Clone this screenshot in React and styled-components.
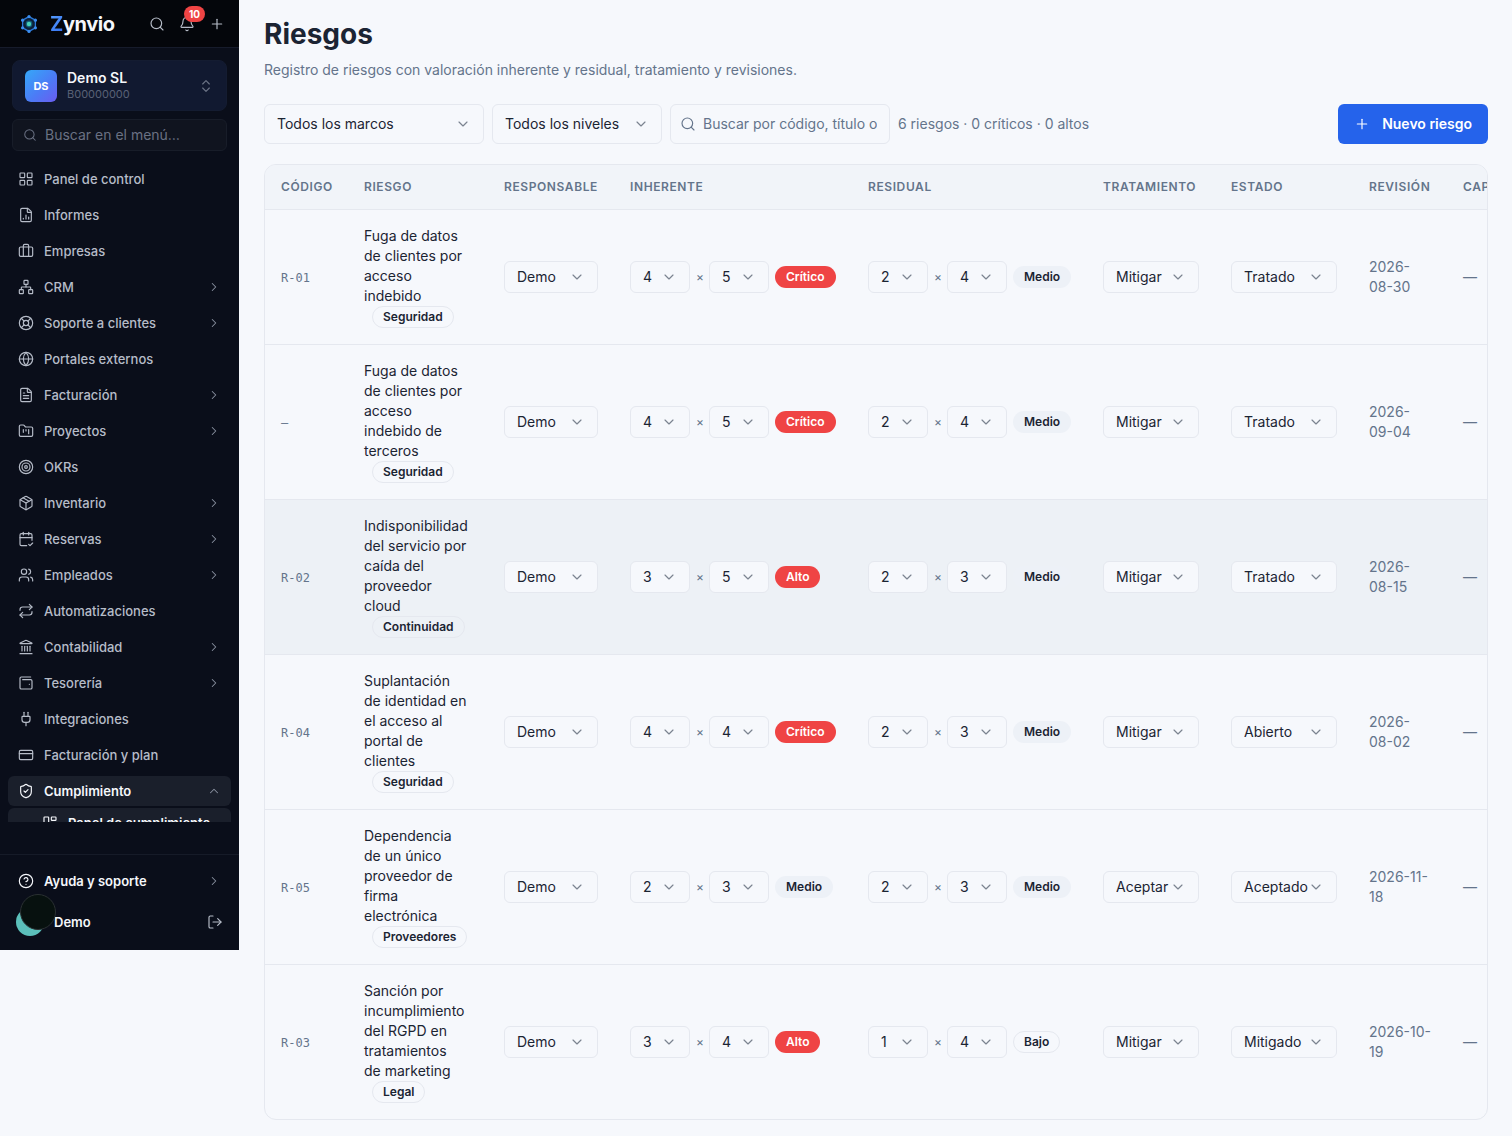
import React from 'react';
import styled, { createGlobalStyle, css } from 'styled-components';
import {
  Bell,
  Briefcase,
  CalendarCheck2,
  ChevronDown,
  ChevronRight,
  ChevronUp,
  ChevronsUpDown,
  CircleHelp,
  CreditCard,
  FileChartColumn,
  FileText,
  FolderKanban,
  Globe,
  Landmark,
  LayoutDashboard,
  LayoutGrid,
  LifeBuoy,
  LogOut,
  Network,
  Package,
  Plug,
  Plus,
  Repeat,
  Search,
  ShieldCheck,
  Target,
  Users,
  WalletMinimal,
} from 'lucide-react';

const color = {
  page: '#f6f8fc',
  head: '#f1f4f9',
  rowActive: '#edf1f6',
  line: '#e5e8ef',
  ink: '#1b2433',
  muted: '#64748b',
  primary: '#2563eb',
  danger: '#ef4444',
};

const GlobalStyle = createGlobalStyle`
  *, *::before, *::after { box-sizing: border-box; }
  body {
    margin: 0;
    background: ${color.page};
    color: ${color.ink};
    font: 400 14px/20px Inter, 'Noto Sans', sans-serif;
  }
  button, input, select { font: inherit; color: inherit; margin: 0; }
  button { cursor: pointer; }
  svg { flex: none; }
`;

/* ---------- Shell ---------- */

const Shell = styled.div`
  display: grid;
  grid-template-columns: 240px minmax(0, 1fr);
  align-items: start;
`;

const Sidebar = styled.aside`
  position: sticky;
  top: 0;
  display: flex;
  flex-direction: column;
  margin-right: 1px;
  background: #0a0e1a;
  color: #b6bcc8;
`;

const Brand = styled.header`
  display: flex;
  align-items: center;
  height: 48px;
  padding: 0 7px 0 20px;
  background: #04060b;
  border-bottom: 1px solid #161b2b;
`;

const BrandName = styled.a`
  display: flex;
  flex: 1;
  align-items: center;
  gap: 12px;
  color: #f5f7fb;
  font-size: 20px;
  font-weight: 700;
  line-height: 24px;
  letter-spacing: -0.02em;
  text-decoration: none;
`;

const BrandInitial = styled.span`
  background: linear-gradient(135deg, #5aa2ff, #2f6bf0);
  background-clip: text;
  color: transparent;
`;

const IconButton = styled.button`
  position: relative;
  display: grid;
  place-items: center;
  width: 30px;
  height: 30px;
  padding: 0;
  border: 0;
  background: none;
  color: #b6bcc8;
`;

const Counter = styled.span`
  position: absolute;
  top: -3px;
  right: -3px;
  padding: 0 5px;
  border-radius: 8px;
  background: ${color.danger};
  color: #fff;
  font-size: 10px;
  font-weight: 700;
  line-height: 16px;
`;

const CompanyButton = styled.button`
  display: flex;
  align-items: center;
  gap: 10px;
  margin: 12px 12px 8px;
  padding: 8px 12px;
  border: 1px solid #141c31;
  border-radius: 8px;
  background: #111930;
  color: #6b7385;
  text-align: left;
`;

const CompanyLogo = styled.span`
  display: grid;
  place-items: center;
  width: 32px;
  height: 32px;
  border-radius: 6px;
  background: linear-gradient(135deg, #35a8f8, #4b7cf6 55%, #6a5cf0);
  color: #fff;
  font-size: 11px;
  font-weight: 700;
  line-height: 16px;
`;

const CompanyText = styled.span`
  display: flex;
  flex: 1;
  flex-direction: column;
`;

const CompanyName = styled.span`
  color: #f5f7fb;
  font-weight: 600;
  line-height: 17px;
`;

const CompanyId = styled.span`
  color: #596176;
  font-size: 11px;
  line-height: 16px;
`;

const MenuSearch = styled.label`
  display: flex;
  align-items: center;
  gap: 8px;
  height: 32px;
  margin: 0 12px;
  padding: 0 10px;
  border: 1px solid #181d29;
  border-radius: 6px;
  background: #10141f;
  color: #6a7183;
`;

const BareInput = styled.input`
  flex: 1;
  width: 0;
  min-width: 0;
  padding: 0;
  border: 0;
  outline: 0;
  background: none;
  &::placeholder { color: currentColor; opacity: 1; }
`;

const Nav = styled.nav`
  display: flex;
  flex-direction: column;
  gap: 6px;
  height: 671px;
  padding: 13px 8px 0;
  overflow-y: auto;
  scrollbar-width: none;
`;

const NavGroup = styled.div`
  display: flex;
  flex-direction: column;
  gap: 2px;
`;

const NavItem = styled.a`
  display: flex;
  flex: none;
  align-items: center;
  gap: 10px;
  width: 100%;
  height: 30px;
  padding: 0 10px;
  padding-left: ${(p) => (p.$nested ? '34px' : '10px')};
  border: 0;
  border-radius: 6px;
  background: ${(p) => (p.$active ? '#1a1f2b' : 'none')};
  color: ${(p) => (p.$bright || p.$active ? '#f5f7fb' : '#b6bcc8')};
  font-size: 13px;
  font-weight: ${(p) => (p.$bright || p.$active ? 600 : 500)};
  text-align: left;
  text-decoration: none;
  white-space: nowrap;
`;

const NavLabel = styled.span`
  flex: 1;
`;

const NavArrow = styled.span`
  display: flex;
  color: #8a91a0;
`;

const SidebarFooter = styled.footer`
  display: flex;
  flex-direction: column;
  gap: 12px;
  margin-top: 32px;
  padding: 11px 8px 14px;
  border-top: 1px solid #161b28;
`;

const UserRow = styled.div`
  position: relative;
  display: flex;
  align-items: center;
  gap: 10px;
  height: 28px;
  padding: 0 1px 0 8px;
  color: #f5f7fb;
  font-size: 13px;
  font-weight: 600;
`;

const Avatar = styled.span`
  width: 28px;
  height: 28px;
  border-radius: 50%;
  background: #5bbfba;
`;

const FloatingButton = styled.button`
  position: absolute;
  top: -14px;
  left: 12px;
  width: 36px;
  height: 36px;
  padding: 0;
  border: 1px solid #2a3032;
  border-radius: 50%;
  background: #07110f;
`;

/* ---------- Page ---------- */

const Main = styled.main`
  padding: 16px 24px;
`;

const Title = styled.h1`
  margin: 0 0 8px;
  font-size: 28px;
  font-weight: 700;
  line-height: 36px;
`;

const Subtitle = styled.p`
  margin: 0 0 24px;
  color: ${color.muted};
`;

const Toolbar = styled.div`
  display: flex;
  align-items: center;
  gap: 8px;
  margin-bottom: 20px;
`;

const Summary = styled.span`
  flex: 1;
  color: ${color.muted};
`;

const field = css`
  border: 1px solid ${color.line};
  border-radius: 6px;
  background: ${color.page};
`;

const SearchField = styled.label`
  ${field}
  display: flex;
  align-items: center;
  gap: 7px;
  width: 220px;
  height: 40px;
  padding: 0 12px 0 9px;
  color: ${color.muted};
`;

const PrimaryButton = styled.button`
  display: flex;
  align-items: center;
  gap: 12px;
  height: 40px;
  padding: 0 16px;
  border: 0;
  border-radius: 6px;
  background: ${color.primary};
  color: #fff;
  font-weight: 600;
`;

const SelectBox = styled.span`
  position: relative;
  display: block;
  flex: none;
  width: ${(p) => p.$width || '100%'};
  color: ${color.ink};
`;

const NativeSelect = styled.select`
  ${field}
  display: block;
  width: 100%;
  height: ${(p) => (p.$large ? '40px' : '32px')};
  padding: 0 20px 0 12px;
  appearance: none;
`;

const SelectArrow = styled(ChevronDown)`
  position: absolute;
  top: calc(50% - 8px);
  right: 13px;
  color: #7b8390;
  pointer-events: none;
`;

/* ---------- Table ---------- */

const TableCard = styled.section`
  border: 1px solid ${color.line};
  border-radius: 12px;
  overflow-x: auto;
  scrollbar-width: none;
`;

const Table = styled.table`
  width: 100%;
  min-width: 1322px;
  table-layout: fixed;
  border-collapse: separate;
  border-spacing: 0;
`;

const Column = styled.col`
  width: ${(p) => p.$width}px;
`;

const HeadCell = styled.th`
  height: 45px;
  padding: 0 16px;
  border-bottom: 1px solid ${color.line};
  background: ${color.head};
  color: ${color.muted};
  font-size: 12px;
  font-weight: 600;
  letter-spacing: 0.05em;
  line-height: 16px;
  text-align: left;
  text-transform: uppercase;
`;

const Cell = styled.td`
  padding: 16px;
  border-bottom: 1px solid ${color.line};
  color: ${(p) => (p.$muted ? color.muted : color.ink)};
  vertical-align: middle;
`;

const Row = styled.tr`
  background: ${(p) => (p.$active ? color.rowActive : 'transparent')};
  &:last-child > td { border-bottom: 0; }
`;

const Code = styled.span`
  color: ${color.muted};
  font-family: 'DejaVu Sans Mono', 'Liberation Mono', monospace;
  font-size: 12px;
`;

const RiskName = styled.div`
  max-width: 104px;
`;

const Score = styled.div`
  display: flex;
  align-items: center;
  gap: 6px;
`;

const Times = styled.span`
  width: 7px;
  color: ${color.muted};
  font-size: 12px;
`;

const badgeTones = {
  danger: css`background: ${color.danger}; color: #fff;`,
  soft: css`background: #edf1f7;`,
  outline: css`border-color: ${color.line};`,
};

const Badge = styled.span`
  display: block;
  width: fit-content;
  margin-left: ${(p) => (p.$indent ? '8px' : '0')};
  padding: 2px 10px;
  border: 1px solid transparent;
  border-radius: 11px;
  font-size: 12px;
  font-weight: 600;
  line-height: 16px;
  ${(p) => badgeTones[p.$tone]}
`;

const DatePart = styled.span`
  white-space: nowrap;
`;

/* ---------- Data ---------- */

const menu = [
  { label: 'Panel de control', icon: LayoutGrid },
  { label: 'Informes', icon: FileChartColumn },
  { label: 'Empresas', icon: Briefcase },
  { label: 'CRM', icon: Network, more: true },
  { label: 'Soporte a clientes', icon: LifeBuoy, more: true },
  { label: 'Portales externos', icon: Globe },
  { label: 'Facturación', icon: FileText, more: true },
  { label: 'Proyectos', icon: FolderKanban, more: true },
  { label: 'OKRs', icon: Target },
  { label: 'Inventario', icon: Package, more: true },
  { label: 'Reservas', icon: CalendarCheck2, more: true },
  { label: 'Empleados', icon: Users, more: true },
  { label: 'Automatizaciones', icon: Repeat },
  { label: 'Contabilidad', icon: Landmark, more: true },
  { label: 'Tesorería', icon: WalletMinimal, more: true },
  { label: 'Integraciones', icon: Plug },
  { label: 'Facturación y plan', icon: CreditCard },
];

const columns = [
  ['Código', 83],
  ['Riesgo', 140],
  ['Responsable', 126],
  ['Inherente', 238],
  ['Residual', 235],
  ['Tratamiento', 128],
  ['Estado', 138],
  ['Revisión', 94],
  ['CAPA', 140],
];

const tones = { Crítico: 'danger', Alto: 'danger', Medio: 'soft', Bajo: 'outline' };

const risks = [
  { code: 'R-01', name: 'Fuga de datos de clientes por acceso indebido', tag: 'Seguridad', inherent: [4, 5, 'Crítico'], residual: [2, 4, 'Medio'], treatment: 'Mitigar', status: 'Tratado', review: ['2026-', '08-30'] },
  { code: '—', name: 'Fuga de datos de clientes por acceso indebido de terceros', tag: 'Seguridad', inherent: [4, 5, 'Crítico'], residual: [2, 4, 'Medio'], treatment: 'Mitigar', status: 'Tratado', review: ['2026-', '09-04'] },
  { code: 'R-02', name: 'Indisponibilidad del servicio por caída del proveedor cloud', tag: 'Continuidad', inherent: [3, 5, 'Alto'], residual: [2, 3, 'Medio'], treatment: 'Mitigar', status: 'Tratado', review: ['2026-', '08-15'], active: true },
  { code: 'R-04', name: 'Suplantación de identidad en el acceso al portal de clientes', tag: 'Seguridad', inherent: [4, 4, 'Crítico'], residual: [2, 3, 'Medio'], treatment: 'Mitigar', status: 'Abierto', review: ['2026-', '08-02'] },
  { code: 'R-05', name: 'Dependencia de un único proveedor de firma electrónica', tag: 'Proveedores', inherent: [2, 3, 'Medio'], residual: [2, 3, 'Medio'], treatment: 'Aceptar', status: 'Aceptado', review: ['2026-11-', '18'] },
  { code: 'R-03', name: 'Sanción por incumplimiento del RGPD en tratamientos de\u00a0marketing', tag: 'Legal', inherent: [3, 4, 'Alto'], residual: [1, 4, 'Bajo'], treatment: 'Mitigar', status: 'Mitigado', review: ['2026-10-', '19'] },
];

const levels = ['1', '2', '3', '4', '5'];
const treatments = ['Mitigar', 'Aceptar'];
const statuses = ['Abierto', 'Tratado', 'Aceptado', 'Mitigado'];

/* ---------- Components ---------- */

function BrandMark() {
  const nodes = [[9, 1.6], [15.4, 5.2], [15.4, 12.8], [9, 16.4], [2.6, 12.8], [2.6, 5.2]];
  return (
    <svg width="18" height="18" viewBox="0 0 18 18" aria-hidden="true">
      <path d="M9 1.6 15.4 5.2V12.8L9 16.4 2.6 12.8V5.2Z" fill="#0c2038" stroke="#2b78d8" strokeWidth="1.3" />
      {nodes.map(([x, y]) => (
        <circle key={`${x}-${y}`} cx={x} cy={y} r="1.6" fill="#3b8ef0" />
      ))}
      <circle cx="9" cy="9" r="3.4" fill="#145a78" />
      <circle cx="9" cy="9" r="2.2" fill="#45d0b8" />
    </svg>
  );
}

function Select({ label, value, options, width, large }) {
  return (
    <SelectBox $width={width}>
      <NativeSelect aria-label={label} defaultValue={value} $large={large}>
        {options.map((option) => (
          <option key={option} value={option}>{option}</option>
        ))}
      </NativeSelect>
      <SelectArrow size={16} strokeWidth={1.75} aria-hidden="true" />
    </SelectBox>
  );
}

function RiskScore({ kind, code, score: [probability, impact, level] }) {
  return (
    <Score>
      <Select label={`Probabilidad ${kind} ${code}`} value={String(probability)} options={levels} width="60px" />
      <Times>×</Times>
      <Select label={`Impacto ${kind} ${code}`} value={String(impact)} options={levels} width="60px" />
      <Badge $tone={tones[level]}>{level}</Badge>
    </Score>
  );
}

function MenuEntry({ icon: Icon, label, more, arrow: Arrow = ChevronRight, ...rest }) {
  const tag = more ? { as: 'button', type: 'button' } : { href: '#' };
  return (
    <NavItem {...tag} {...rest}>
      <Icon size={16} strokeWidth={1.75} aria-hidden="true" />
      <NavLabel>{label}</NavLabel>
      {more && (
        <NavArrow><Arrow size={14} strokeWidth={1.75} aria-hidden="true" /></NavArrow>
      )}
    </NavItem>
  );
}

function AppSidebar() {
  return (
    <Sidebar>
      <Brand>
        <BrandName href="#">
          <BrandMark />
          <span><BrandInitial>Z</BrandInitial>ynvio</span>
        </BrandName>
        <IconButton type="button" aria-label="Buscar"><Search size={16} strokeWidth={1.75} /></IconButton>
        <IconButton type="button" aria-label="Notificaciones">
          <Bell size={16} strokeWidth={1.75} />
          <Counter>10</Counter>
        </IconButton>
        <IconButton type="button" aria-label="Crear"><Plus size={16} strokeWidth={1.75} /></IconButton>
      </Brand>
      <CompanyButton type="button">
        <CompanyLogo>DS</CompanyLogo>
        <CompanyText>
          <CompanyName>Demo SL</CompanyName>
          <CompanyId>B00000000</CompanyId>
        </CompanyText>
        <ChevronsUpDown size={16} strokeWidth={1.75} aria-hidden="true" />
      </CompanyButton>
      <MenuSearch>
        <Search size={14} strokeWidth={1.75} aria-hidden="true" />
        <BareInput type="text" aria-label="Buscar en el menú" placeholder="Buscar en el menú…" />
      </MenuSearch>
      <Nav>
        {menu.map((item) => <MenuEntry key={item.label} {...item} />)}
        <NavGroup>
          <MenuEntry icon={ShieldCheck} label="Cumplimiento" more arrow={ChevronUp} $active />
          <MenuEntry icon={LayoutDashboard} label="Panel de cumplimiento" $active $nested />
        </NavGroup>
      </Nav>
      <SidebarFooter>
        <MenuEntry icon={CircleHelp} label="Ayuda y soporte" more $bright />
        <UserRow>
          <Avatar />
          <NavLabel>Demo</NavLabel>
          <IconButton type="button" aria-label="Cerrar sesión"><LogOut size={16} strokeWidth={1.75} /></IconButton>
          <FloatingButton type="button" aria-label="Asistente" />
        </UserRow>
      </SidebarFooter>
    </Sidebar>
  );
}

export default function App() {
  return (
    <>
      <GlobalStyle />
      <Shell>
        <AppSidebar />
        <Main>
          <Title>Riesgos</Title>
          <Subtitle>Registro de riesgos con valoración inherente y residual, tratamiento y revisiones.</Subtitle>
          <Toolbar>
            <Select label="Marco" value="Todos los marcos" options={['Todos los marcos']} width="220px" large />
            <Select label="Nivel" value="Todos los niveles" options={['Todos los niveles']} width="170px" large />
            <SearchField>
              <Search size={16} strokeWidth={1.75} aria-hidden="true" />
              <BareInput type="text" aria-label="Buscar riesgos" placeholder="Buscar por código, título o descripción" />
            </SearchField>
            <Summary>6 riesgos · 0 críticos · 0 altos</Summary>
            <PrimaryButton type="button">
              <Plus size={16} strokeWidth={1.75} aria-hidden="true" />
              Nuevo riesgo
            </PrimaryButton>
          </Toolbar>
          <TableCard>
            <Table>
              <colgroup>
                {columns.map(([name, width]) => <Column key={name} $width={width} />)}
              </colgroup>
              <thead>
                <tr>{columns.map(([name]) => <HeadCell key={name} scope="col">{name}</HeadCell>)}</tr>
              </thead>
              <tbody>
                {risks.map((risk) => (
                  <Row key={risk.name} $active={risk.active}>
                    <Cell><Code>{risk.code}</Code></Cell>
                    <Cell>
                      <RiskName>{risk.name}</RiskName>
                      <Badge $tone="outline" $indent>{risk.tag}</Badge>
                    </Cell>
                    <Cell><Select label={`Responsable ${risk.code}`} value="Demo" options={['Demo']} /></Cell>
                    <Cell><RiskScore kind="inherente" code={risk.code} score={risk.inherent} /></Cell>
                    <Cell><RiskScore kind="residual" code={risk.code} score={risk.residual} /></Cell>
                    <Cell><Select label={`Tratamiento ${risk.code}`} value={risk.treatment} options={treatments} /></Cell>
                    <Cell><Select label={`Estado ${risk.code}`} value={risk.status} options={statuses} /></Cell>
                    <Cell $muted>
                      <DatePart>{risk.review[0]}</DatePart>
                      <wbr />
                      <DatePart>{risk.review[1]}</DatePart>
                    </Cell>
                    <Cell $muted>—</Cell>
                  </Row>
                ))}
              </tbody>
            </Table>
          </TableCard>
        </Main>
      </Shell>
    </>
  );
}
